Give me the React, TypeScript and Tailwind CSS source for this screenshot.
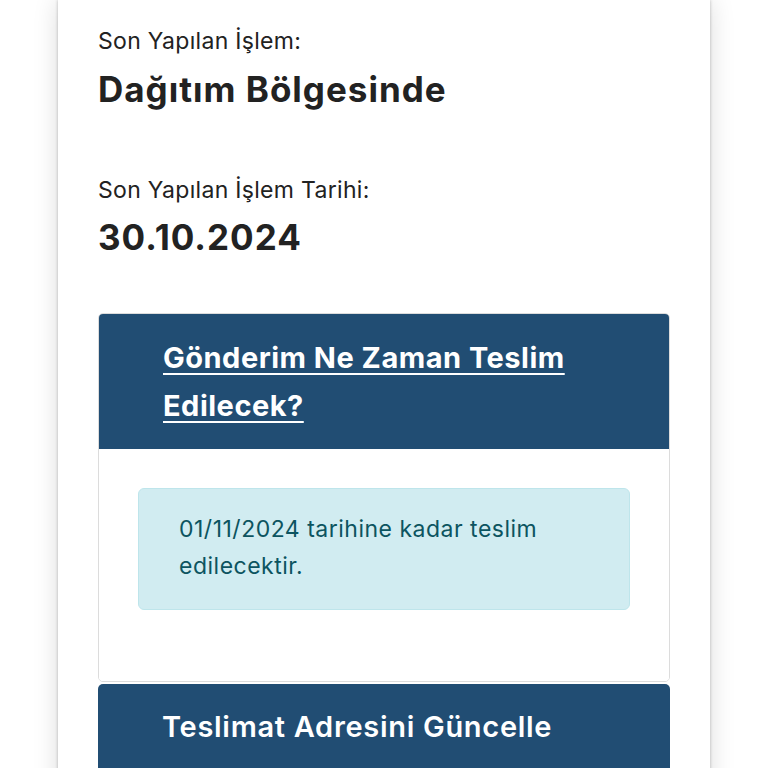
import React from 'react';

const font = { fontFamily: 'Inter, "Noto Sans", sans-serif' };

const InfoRow: React.FC<{ label: string; value: string; gap: string }> = ({ label, value, gap }) => (
  <div className="flex flex-col">
    <p className="text-[23px] leading-[30px] tracking-[0.3px] text-[#222222]">{label}</p>
    <p className={`${gap} text-[35px] leading-[44px] font-bold tracking-[1px] text-[#222222]`}>{value}</p>
  </div>
);

const App: React.FC = () => {
  return (
    <div className="w-[768px] h-[768px] overflow-hidden bg-white" style={font}>
      <div className="mx-[58px] min-h-[800px] bg-white shadow-[0_0_3px_rgba(0,0,0,0.25),0_0_24px_rgba(0,0,0,0.14)] px-[40px] pt-[26px]">
        <InfoRow label="Son Yapılan İşlem:" value="Dağıtım Bölgesinde" gap="mt-[11px]" />
        <div className="mt-[64px]">
          <InfoRow label="Son Yapılan İşlem Tarihi:" value="30.10.2024" gap="mt-[10px]" />
        </div>

        {/* Delivery date accordion */}
        <div className="mt-[54px] rounded-[5px] border border-[#dcdcdc] overflow-hidden">
          <div className="bg-[#214d73] pl-[64px] pr-[36px] pt-[20px] pb-[19px]">
            <a
              href="#"
              className="text-[29px] leading-[48px] font-bold tracking-[0.5px] text-white underline decoration-2 underline-offset-[5px]"
            >
              Gönderim Ne Zaman Teslim Edilecek?
            </a>
          </div>
          <div className="bg-white px-[39px] pt-[39px] pb-[71px]">
            <div className="rounded-[6px] border border-[#bee5eb] bg-[#d1ecf1] px-[40px] pt-[22px] pb-[24px]">
              <p className="text-[23px] leading-[37px] tracking-[0.5px] text-[#0c5460]">
                01/11/2024 tarihine kadar teslim edilecektir.
              </p>
            </div>
          </div>
        </div>

        <div className="mt-[2px] rounded-[5px] overflow-hidden">
          <div className="bg-[#214d73] pl-[64px] pr-[36px] pt-[19px] pb-[40px]">
            <span className="text-[29px] leading-[48px] font-semibold tracking-[0.7px] text-white">
              Teslimat Adresini Güncelle
            </span>
          </div>
        </div>
      </div>
    </div>
  );
};

export default App;
